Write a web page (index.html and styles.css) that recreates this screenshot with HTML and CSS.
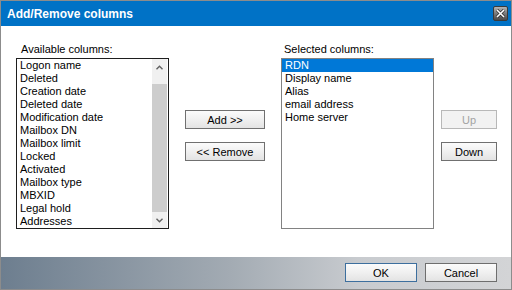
FILE: index.html
```html
<!DOCTYPE html>
<html lang="en">
<head>
    <meta charset="UTF-8">
    <title>Add/Remove columns</title>
    <link rel="stylesheet" href="styles.css">
</head>
<body>
<div class="dialog">
    <div class="title_bar">
        <span class="title">Add/Remove columns</span>
        <span class="close_btn">
            <svg width="9" height="9" viewBox="0 0 9 9"><path d="M1 1L8 8M8 1L1 8" stroke="#2a2a2a" stroke-width="3"/><path d="M1 1L8 8M8 1L1 8" stroke="#ffffff" stroke-width="1.6"/></svg>
        </span>
    </div>
    <div class="content">
        <div class="group group_left">
            <div class="label">Available columns:</div>
            <div class="listbox listbox_focus">
                <ul class="items">
                    <li>Logon name</li>
                    <li>Deleted</li>
                    <li>Creation date</li>
                    <li>Deleted date</li>
                    <li>Modification date</li>
                    <li>Mailbox DN</li>
                    <li>Mailbox limit</li>
                    <li>Locked</li>
                    <li>Activated</li>
                    <li>Mailbox type</li>
                    <li>MBXID</li>
                    <li>Legal hold</li>
                    <li>Addresses</li>
                </ul>
                <div class="scrollbar">
                    <div class="arrow arrow_up"><svg width="7" height="5" viewBox="0 0 7 5"><path d="M0.5 4.2L3.5 1.2L6.5 4.2" fill="none" stroke="#606060" stroke-width="1.4"/></svg></div>
                    <div class="track_gap"></div>
                    <div class="thumb"></div>
                    <div class="arrow arrow_down"><svg width="7" height="5" viewBox="0 0 7 5"><path d="M0.5 0.8L3.5 3.8L6.5 0.8" fill="none" stroke="#606060" stroke-width="1.4"/></svg></div>
                </div>
            </div>
        </div>
        <div class="btn_col btn_col_mid">
            <button class="btn">Add &gt;&gt;</button>
            <button class="btn">&lt;&lt; Remove</button>
        </div>
        <div class="group group_right">
            <div class="label">Selected columns:</div>
            <div class="listbox">
                <ul class="items">
                    <li class="selected">RDN</li>
                    <li>Display name</li>
                    <li>Alias</li>
                    <li>email address</li>
                    <li>Home server</li>
                </ul>
            </div>
        </div>
        <div class="btn_col btn_col_side">
            <button class="btn btn_disabled">Up</button>
            <button class="btn">Down</button>
        </div>
    </div>
    <div class="footer">
        <button class="btn btn_footer btn_default">OK</button>
        <button class="btn btn_footer">Cancel</button>
    </div>
</div>
</body>
</html>
```

FILE: styles.css
```css
*{
    margin: 0;
    padding: 0;
    list-style: none;
    box-sizing: border-box;
}
body{
    font-family: "Liberation Sans", Arial, sans-serif;
    font-size: 11px;
    color: #000000;
    background: #ffffff;
}
.dialog{
    width: 512px;
    height: 290px;
    border: 1px solid #8c8c8c;
    display: flex;
    flex-direction: column;
    background: #ffffff;
}
.title_bar{
    height: 25px;
    background: #0072c6;
    display: flex;
    align-items: center;
    justify-content: space-between;
    padding: 0 3px 0 6px;
}
.title{
    color: #ffffff;
    font-weight: bold;
    font-size: 12px;
}
.close_btn{
    width: 15px;
    height: 15px;
    border-radius: 2px;
    border: 1px solid #3a3a3a;
    background: linear-gradient(#b4b4b4, #7a7a7a 50%, #4a4a4a);
    display: flex;
    align-items: center;
    justify-content: center;
}
.content{
    flex: 1;
    display: flex;
    padding: 17px 0 0 15px;
}
.label{
    height: 13px;
    line-height: 13px;
    margin-bottom: 2px;
    white-space: nowrap;
}
.group_left .label{
    padding-left: 5px;
}
.group_right{
    margin-left: 16px;
}
.group_right .label{
    padding-left: 3px;
}
.listbox{
    width: 153px;
    height: 171px;
    border: 1px solid #828282;
    display: flex;
}
.listbox_focus{
    border-color: #1e1e1e;
}
.items{
    flex: 1;
}
.items li{
    height: 13px;
    line-height: 13px;
    padding-left: 3px;
    white-space: nowrap;
}
.items li.selected{
    background: #0078d7;
    color: #ffffff;
}
.scrollbar{
    width: 15px;
    margin-right: 1px;
    background: #f0f0f0;
    display: flex;
    flex-direction: column;
}
.arrow{
    height: 17px;
    display: flex;
    align-items: center;
    justify-content: center;
}
.arrow_down{
    height: 16px;
}
.track_gap{
    height: 8px;
}
.thumb{
    flex: 1;
    background: #cdcdcd;
}
.btn_col{
    display: flex;
    flex-direction: column;
    gap: 13px;
    padding-top: 67px;
}
.btn_col_mid{
    margin-left: 16px;
}
.btn_col_side{
    margin-left: 7px;
}
.btn{
    font-family: "Liberation Sans", Arial, sans-serif;
    font-size: 11px;
    height: 19px;
    padding-top: 1px;
    border: 1px solid #707070;
    background: linear-gradient(#fbfbfb, #f0f0f0 50%, #e3e3e3);
    color: #000000;
}
.btn_col_mid .btn{
    width: 80px;
}
.btn_col_side .btn{
    width: 56px;
}
.btn_disabled{
    border-color: #b8b8b8;
    background: #f2f2f2;
    color: #a3a3a3;
}
.footer{
    height: 32px;
    background: linear-gradient(to right, #6d7e8f, #a3abb3 45%, #c8cbcf 70%, #d3d4d6);
    display: flex;
    justify-content: flex-end;
    gap: 8px;
    padding: 6px 14px 0 0;
}
.btn_footer{
    width: 72px;
    border-color: #6e6e6e;
}
.btn_default{
    border-color: #3d6f9e;
}
```
